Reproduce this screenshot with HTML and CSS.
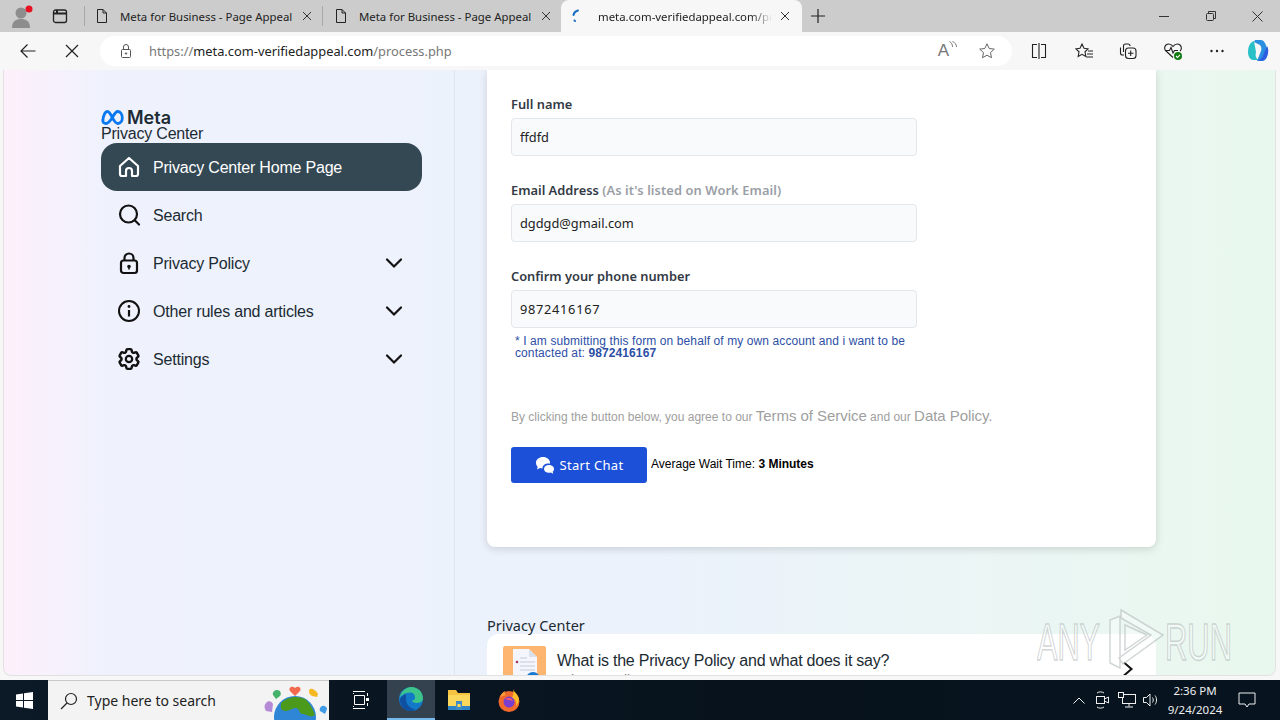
FILE: index.html
```html
<!DOCTYPE html>
<html lang="en">
<head>
  <meta charset="UTF-8">
  <meta name="viewport" content="width=device-width, initial-scale=1.0">
  <title>Meta for Business - Page Appeal</title>
  <link rel="stylesheet" href="styles.css">
</head>
<body>
  <!-- browser tabs -->
  <div class="tabstrip">
    <div class="profile">
      <svg width="24" height="26" viewBox="0 0 24 26"><circle cx="10" cy="10" r="5.5" fill="#8d8d8d"/><path d="M1 25c0-7 4-9 9-9s9 2 9 9z" fill="#8d8d8d"/><circle cx="18" cy="6" r="3.5" fill="#e81123"/></svg>
    </div>
    <div class="strip-btn">
      <svg width="16" height="16" viewBox="0 0 16 16" fill="none" stroke="#222" stroke-width="1.3"><rect x="1.5" y="2" width="13" height="12.5" rx="2"/><path d="M1.5 5.5h13M5 2v3.5" stroke-width="2"/></svg>
    </div>
    <div class="strip-sep"></div>
    <div class="tab">
      <svg class="doc" width="16" height="16" viewBox="0 0 16 16" fill="none" stroke="#222"><path d="M3.5 1.5h5.5l3.5 3.5v9.500h-9zM9 1.500v3.500h3.500"/></svg>
      <span class="tab-title">Meta for Business - Page Appeal</span>
      <svg width="10" height="10" viewBox="0 0 10 10" stroke="#333"><path d="M1 1l8 8M9 1l-8 8"/></svg>
    </div>
    <div class="strip-sep tight"></div>
    <div class="tab">
      <svg class="doc" width="16" height="16" viewBox="0 0 16 16" fill="none" stroke="#222"><path d="M3.5 1.5h5.5l3.500 3.500v9.500h-9zM9 1.500v3.500h3.500"/></svg>
      <span class="tab-title">Meta for Business - Page Appeal</span>
      <svg width="10" height="10" viewBox="0 0 10 10" stroke="#333"><path d="M1 1l8 8M9 1l-8 8"/></svg>
    </div>
    <div class="tab tab-active">
      <svg class="spinner" width="16" height="16" viewBox="0 0 16 16" fill="none" stroke-linecap="round"><path d="M9 2.500C6.500 3 5 4.500 4.500 7" stroke="#1b6fc2" stroke-width="2"/><path d="M5.500 12.500l.5.500" stroke="#1b6fc2" stroke-width="2"/></svg>
      <span class="tab-title fade">meta.com-verifiedappeal.com/process.php</span>
      <svg width="10" height="10" viewBox="0 0 10 10" stroke="#333"><path d="M1 1l8 8M9 1l-8 8"/></svg>
    </div>
    <div class="new-tab">
      <svg width="16" height="16" viewBox="0 0 16 16" stroke="#222" stroke-width="1.2"><path d="M8 1v14M1 8h14"/></svg>
    </div>
    <div class="win-controls">
      <svg width="10" height="10" viewBox="0 0 10 10" stroke="#333"><path d="M0 5.500h10"/></svg>
      <svg width="10" height="10" viewBox="0 0 10 10" fill="none" stroke="#333"><rect x=".5" y="2.500" width="7" height="7" rx="1"/><path d="M2.500 2.500V.5h7v7h-2"/></svg>
      <svg width="11" height="11" viewBox="0 0 11 11" stroke="#333"><path d="M.5.5l10 10M10.500.5l-10 10"/></svg>
    </div>
  </div>

  <!-- address bar -->
  <div class="toolbar">
    <div class="nav-btns">
      <svg width="16" height="16" viewBox="0 0 16 16" fill="none" stroke="#222" stroke-width="1.2"><path d="M15.500 8H1M7.500 1.500L1 8l6.500 6.500"/></svg>
      <svg width="14" height="14" viewBox="0 0 14 14" stroke="#222" stroke-width="1.2"><path d="M1 1l12 12M13 1L1 13"/></svg>
    </div>
    <div class="address">
      <svg width="14" height="16" viewBox="0 0 14 16" fill="none" stroke="#555"><rect x="2.500" y="6.500" width="9" height="8" rx="1"/><path d="M4.500 6.500V4a2.500 2.500 0 0 1 5 0v2.500"/><circle cx="7" cy="10.500" r=".7" fill="#555"/></svg>
      <span class="url"><span class="url-dim">https://</span>meta.com-verifiedappeal.com<span class="url-dim">/process.php</span></span>
      <div class="address-icons">
        <span class="read-aloud">A<svg width="8" height="10" viewBox="0 0 8 10" fill="none" stroke="#777"><path d="M.5.5c2 1 3 3 3 5.500M3.500.5c2.500 1 4 3 4 5.500"/></svg></span>
        <svg width="18" height="18" viewBox="0 0 18 18" fill="none" stroke="#666" stroke-width="1"><path d="M9 1.800l2.200 4.700 5.100.6-3.800 3.500 1 5.100L9 13.200l-4.500 2.500 1-5.100L1.700 7.100l5.100-.6z"/></svg>
      </div>
    </div>
    <div class="tool-icons">
      <svg width="18" height="18" viewBox="0 0 18 18" fill="none" stroke="#222" stroke-width="1.100"><path d="M7 2.500H2.500v13H7M11 2.500h4.500v13H11M9 1v16"/></svg>
      <svg width="20" height="18" viewBox="0 0 20 18" fill="none" stroke="#222" stroke-width="1.100"><path d="M8 2l2 4.300 4 .5-3 3 .8 4.700L8 12.300l-3.800 2.200.8-4.700-3-3 4-.5zM14 9h5M13 12h6M12.500 15h6.500"/></svg>
      <svg width="18" height="18" viewBox="0 0 18 18" fill="none" stroke="#222" stroke-width="1.100"><path d="M5 13H3.500a2 2 0 0 1-2-2V5.500M4.500 10V4a2 2 0 0 1 2-2H9a2 2 0 0 1 2 2"/><rect x="6.500" y="6" width="10.500" height="10.500" rx="3"/><path d="M11.700 8.500v5.500M9 11.200h5.500"/></svg>
      <svg width="20" height="18" viewBox="0 0 20 18" fill="none" stroke="#222" stroke-width="1.100"><path d="M10 15.500L3 9a4 4 0 0 1 0-6c2-1.500 5-1 7 1.500C12 2 15 1.500 17 3a4 4 0 0 1 0 6"/><path d="M2 8.500h4.500L8 5.500l2 5.500 1.500-2.500H15"/><circle cx="15" cy="14" r="4" fill="#107c10" stroke="none"/><path d="M13 14l1.500 1.500L17 12.800" stroke="#fff"/></svg>
      <svg width="16" height="16" viewBox="0 0 16 16" fill="#222"><circle cx="2.500" cy="8" r="1.200"/><circle cx="8" cy="8" r="1.200"/><circle cx="13.500" cy="8" r="1.200"/></svg>
      <svg width="26" height="26" viewBox="0 0 26 26"><path d="M10 2h6c3 0 5 4 6 9 1 6 0 11-4 12h-6l4-10c1-3 0-6-3-7L9 4z" fill="#2a8fe0"/><path d="M9 3c-4 1-6 6-6 11 0 4 2 8 5 8h6c-3-1-4-4-3-8z" fill="#29c0c8"/><path d="M22 8c2 3 2 11-3 14-2 1-5 1-7 0 4 0 6-3 7-7z" fill="#2b5ee0"/></svg>
    </div>
  </div>

  <!-- web page -->
  <div class="page">
    <aside class="sidebar">
      <div class="brand">
        <svg width="23" height="15" viewBox="0 0 23 15" fill="none" stroke="#0a78f0" stroke-width="2.800"><path d="M2 10.500C2 6 4 1.500 6.500 1.500c3.500 0 6 12 10 12 2.500 0 4.800-2 4.800-5.500 0-4-2-6.500-4.800-6.500-3.500 0-6.500 12-11.500 12-2 0-3.200-1-3.200-3z"/></svg>
        <span class="brand-name">Meta</span>
      </div>
      <div class="brand-sub">Privacy Center</div>
      <nav class="side-nav">
        <a class="side-item active" href="#">
          <svg class="side-icon" viewBox="0 0 24 24" fill="none" stroke="#fff" stroke-width="2.200" stroke-linejoin="round"><path d="M3 11l9-8 9 8v8a2 2 0 0 1-2 2h-4v-5a3 3 0 0 0-6 0v5H5a2 2 0 0 1-2-2z"/></svg>
          <span>Privacy Center Home Page</span>
        </a>
        <a class="side-item" href="#">
          <svg class="side-icon" viewBox="0 0 24 24" fill="none" stroke="#111" stroke-width="2.200" stroke-linecap="round"><circle cx="11.500" cy="11" r="8.500"/><path d="M18 17.500l4 4"/></svg>
          <span>Search</span>
        </a>
        <a class="side-item" href="#">
          <svg class="side-icon" viewBox="0 0 24 24" fill="none" stroke="#111" stroke-width="2.200"><rect x="4" y="9.500" width="16" height="12.500" rx="2.500"/><path d="M7.500 9.500V7a4.500 4.500 0 0 1 9 0v2.500"/><circle cx="12" cy="15.500" r="1.800" fill="#111" stroke="none"/><path d="M12 16v2.500" stroke-width="1.600"/></svg>
          <span>Privacy Policy</span>
          <svg class="side-chevron" viewBox="0 0 24 24" fill="none" stroke="#111" stroke-width="2.200" stroke-linecap="round"><path d="M5 8.500l7 7 7-7"/></svg>
        </a>
        <a class="side-item" href="#">
          <svg class="side-icon" viewBox="0 0 24 24" fill="none" stroke="#111" stroke-width="2"><circle cx="12" cy="12" r="10"/><path d="M12 11v6.500" stroke-width="2.200"/><circle cx="12" cy="7.500" r="1.400" fill="#111" stroke="none"/></svg>
          <span>Other rules and articles</span>
          <svg class="side-chevron" viewBox="0 0 24 24" fill="none" stroke="#111" stroke-width="2.200" stroke-linecap="round"><path d="M5 8.500l7 7 7-7"/></svg>
        </a>
        <a class="side-item" href="#">
          <svg class="side-icon" viewBox="0 0 24 24" fill="none" stroke="#111" stroke-width="2.200"><path d="M9.594 3.940c.09-.542.56-.94 1.110-.94h2.593c.55 0 1.020.398 1.110.94l.213 1.281c.063.374.313.686.645.870.074.040.147.083.22.127.325.196.72.257 1.075.124l1.217-.456a1.125 1.125 0 0 1 1.370.49l1.296 2.247a1.125 1.125 0 0 1-.26 1.431l-1.003.827c-.293.241-.438.613-.43.992a7.723 7.723 0 0 1 0 .255c-.008.378.137.75.43.991l1.004.827c.424.35.534.955.26 1.430l-1.298 2.247a1.125 1.125 0 0 1-1.369.491l-1.217-.456c-.355-.133-.75-.072-1.076.124a6.470 6.470 0 0 1-.22.128c-.331.183-.581.495-.644.869l-.213 1.281c-.09.543-.56.94-1.110.94h-2.594c-.55 0-1.019-.398-1.110-.94l-.213-1.281c-.062-.374-.312-.686-.644-.87a6.520 6.520 0 0 1-.22-.127c-.325-.196-.72-.257-1.076-.124l-1.217.456a1.125 1.125 0 0 1-1.369-.49l-1.297-2.247a1.125 1.125 0 0 1 .26-1.431l1.004-.827c.292-.24.437-.613.43-.991a6.932 6.932 0 0 1 0-.255c.007-.38-.138-.751-.43-.992l-1.004-.827a1.125 1.125 0 0 1-.26-1.430l1.297-2.247a1.125 1.125 0 0 1 1.370-.491l1.216.456c.356.133.751.072 1.076-.124.072-.044.146-.086.22-.128.332-.183.582-.495.644-.869l.214-1.280z" transform="translate(-1.200 -1.200) scale(1.100)"/><circle cx="12" cy="12" r="3.200"/></svg>
          <span>Settings</span>
          <svg class="side-chevron" viewBox="0 0 24 24" fill="none" stroke="#111" stroke-width="2.200" stroke-linecap="round"><path d="M5 8.500l7 7 7-7"/></svg>
        </a>
      </nav>
    </aside>

    <main class="main">
      <form class="form-card">
        <div class="field">
          <label class="field-label">Full name</label>
          <div class="field-input">ffdfd</div>
        </div>
        <div class="field">
          <label class="field-label">Email Address <span class="muted">(As it's listed on Work Email)</span></label>
          <div class="field-input">dgdgd@gmail.com</div>
        </div>
        <div class="field">
          <label class="field-label">Confirm your phone number</label>
          <div class="field-input wide">9872416167</div>
        </div>
        <p class="hint">* I am submitting this form on behalf of my own account and i want to be contacted at: <b>9872416167</b></p>
        <p class="terms">By clicking the button below, you agree to our <span class="terms-link">Terms of Service</span> and our <span class="terms-link">Data Policy.</span></p>
        <div class="chat-row">
          <button class="chat-btn" type="button">
            <svg width="20" height="18" viewBox="0 0 20 18" fill="#fff"><path d="M8 1c4 0 7 2.500 7 5.500a4 4 0 0 1-.2 1.200C11 7 7.500 9 7.500 12l-.1.500c-1 0-1.800-.1-2.500-.4L2 13.500l.7-2.700C1.600 9.800 1 8.300 1 6.500 1 3.500 4 1 8 1z"/><path d="M14 9c2.800 0 5 1.700 5 3.900 0 1.100-.5 2-1.300 2.700l.5 2.100-2.400-1.200c-.6.200-1.200.3-1.800.3-2.800 0-5-1.700-5-3.900S11.200 9 14 9z"/></svg>
            <span>Start Chat</span>
          </button>
          <span class="wait">Average Wait Time: <b>3 Minutes</b></span>
        </div>
      </form>

      <div class="section-title">Privacy Center</div>
      <div class="topic-card">
        <div class="topic-thumb">
          <svg width="43" height="43" viewBox="0 0 43 43"><path d="M10 3h16l8 8v32H10z" fill="#f4f6fb"/><path d="M26 3l8 8h-8z" fill="#d9dfeb"/><path d="M17 12h7M17 16h15M17 20h15M17 24h15" stroke="#c5cbd9"/><circle cx="14" cy="16" r="1.300" fill="#a23a5a"/><circle cx="30" cy="33" r="7" fill="#1877d2"/></svg>
        </div>
        <div class="topic-text">
          <div class="topic-q">What is the Privacy Policy and what does it say?</div>
          <div class="topic-sub">Privacy Policy</div>
        </div>
        <svg class="topic-arrow" width="12" height="16" viewBox="0 0 12 16" fill="none" stroke="#111" stroke-width="2"><path d="M2 1.500L9.500 8 2 14.500"/></svg>
      </div>
    </main>

    <svg class="watermark" width="200" height="66" viewBox="0 0 200 66" fill="#fff" fill-opacity=".35" stroke="#b4baba" stroke-opacity=".6">
      <text x="0" y="52" textLength="63" lengthAdjust="spacingAndGlyphs" class="wm-text">ANY</text>
      <text x="128" y="52" textLength="67" lengthAdjust="spacingAndGlyphs" class="wm-text">RUN</text>
      <path d="M73 12v43l10 5V8zM84 2l42 25-40 29-4-6 32-23-30-17z" stroke-width="1.500"/>
      <path d="M88 17l22 10-22 15z" stroke-width="1.500"/>
    </svg>
  </div>

  <!-- windows taskbar -->
  <div class="taskbar">
    <div class="start">
      <svg width="17" height="17" viewBox="0 0 17 17" fill="#fff"><path d="M0 2.500l7-1v6.500H0zM8 1.300L17 0v8H8zM0 9h7v6.500l-7-1zM8 9h9v8l-9-1.300z"/></svg>
    </div>
    <div class="task-search">
      <svg width="18" height="18" viewBox="0 0 18 18" fill="none" stroke="#222" stroke-width="1.200"><circle cx="11" cy="7" r="5.500"/><path d="M7 11l-6 6"/></svg>
      <span class="search-text">Type here to search</span>
      <svg class="search-art" width="72" height="40" viewBox="0 0 72 40"><circle cx="36" cy="36" r="21" fill="#2f86d6"/><path d="M22 22c6-6 16-8 24-4 4 3 8 10 10 16-6 4-8-2-13-1-4-2-2-6-7-6-4 0-6 5-13 2-2-2-1-5-1-7z" fill="#4c9a1c"/><path d="M36 7c-3-3-7 0-5 3l5 5 5-5c2-3-2-6-5-3z" fill="#f2694e"/><path d="M18 9c-2 0-5 2-4 5l3 4 4-3c2-3 0-6-3-6z" fill="#45b26b"/><path d="M51 8c2-1 6 1 8 5l-1 3-5-1c-3-2-4-5-2-7z" fill="#f5b81f"/><path d="M7 22c2-3 6-2 7 1l-1 8-6-1c-2-3-2-6 0-8z" fill="#b48ad6"/><path d="M63 25c2-1 5 1 5 3l-2 5-5-3c-1-2 0-4 2-5z" fill="#3f9be8"/></svg>
    </div>
    <div class="task-apps">
      <div class="task-app">
        <svg width="17" height="18" viewBox="0 0 17 18" fill="none" stroke="#fff"><path d="M1 .5h12M1 17.500h12M2.500 4.500h10v9h-10zM1 2.500h1M1 15.500h1"/><rect x="14" y="7" width="3" height="3" fill="#fff" stroke="none"/><path d="M15.500 2v3M15.500 12v3"/></svg>
      </div>
      <div class="task-app running">
        <svg width="26" height="26" viewBox="0 0 26 26"><circle cx="13" cy="13" r="12" fill="#1478c8"/><path d="M1.500 12C3 5 8 1 13.500 1 20 1 25 6 25 12.500c0 3-3 4.500-6.500 4.500-3 0-4.500-1-4.500-2.500 2 0 3-1 3-3 0-3-2-5-5-5-5 0-9 3-10.500 5.500z" fill="#3cc48a"/><path d="M8 13c0 5 3 9 9 10.500-2 1-3 1.500-4.500 1.500C6 25 2 20 2 14c0-2 3-5 6-5.500z" fill="#1050a0"/></svg>
      </div>
      <div class="task-app">
        <svg width="24" height="22" viewBox="0 0 24 22"><path d="M1 1h8l2 3h12v17H1z" fill="#f5c242"/><path d="M1 6h22v15H1z" fill="#fbd75b"/><path d="M1 17h22v4H1z" fill="#2f84c6"/><path d="M9 12h6v9H9z" fill="#3f8bc8"/><path d="M10.500 15h3v3h-3z" fill="#fbd75b"/></svg>
      </div>
      <div class="task-app">
        <svg width="24" height="24" viewBox="0 0 24 24"><circle cx="12" cy="13.500" r="10.500" fill="#f1692d"/><path d="M16 1c1 3 5 5 6 10 0 3-1 5-3 7 1-4-1-7-4-8 1-3 2-6 1-9z" fill="#ffbc2a"/><path d="M3 9c1-3 3-5 5-6-1 2 0 3 1 4z" fill="#ff9a3a"/><circle cx="12" cy="14" r="5.500" fill="#7b3fd0"/><path d="M8 11c3-2 7-1 8 2-2-1-5-1-8-2z" fill="#ff5a6a"/></svg>
      </div>
    </div>
    <div class="tray">
      <svg class="tray-up" width="12" height="7" viewBox="0 0 12 7" fill="none" stroke="#eee"><path d="M.5 6.500L6 1l5.500 5.500"/></svg>
      <svg width="16" height="18" viewBox="0 0 16 18" fill="none" stroke="#eee"><rect x="1.500" y="5.500" width="8" height="7"/><path d="M9.500 8l4-2v6l-4-2M2 2c2-1.500 5-1.500 7 0M2 16c2 1.500 5 1.500 7 0"/></svg>
      <svg width="18" height="16" viewBox="0 0 18 16" fill="none" stroke="#eee"><rect x="4.500" y="2.500" width="13" height="9"/><rect x=".5" y=".5" width="5" height="5" fill="#0a1722"/><path d="M11 11.500v3M7 15h8"/></svg>
      <svg width="16" height="16" viewBox="0 0 16 16" fill="none" stroke="#eee"><path d="M.5 5.500h3l3.500-3.500v12L3.500 10.500h-3zM9.500 5.500c1 1.500 1 3.500 0 5M12 3.500c2 2.500 2 6.500 0 9"/></svg>
      <div class="clock"><span>2:36 PM</span><span>9/24/2024</span></div>
      <svg class="notify" width="18" height="16" viewBox="0 0 18 16" fill="none" stroke="#eee"><path d="M1 1h16v11h-6l-2 3-2-3H1z"/></svg>
    </div>
  </div>
</body>
</html>
```
FILE: styles.css
```css
* {
  box-sizing: border-box;
}
html, body {
  margin: 0;
  height: 100%;
}
body {
  width: 1280px;
  height: 720px;
  overflow: hidden;
  display: flex;
  flex-direction: column;
  background-color: #f7f7f7;
  font-family: "Liberation Sans", Arial, sans-serif;
}

/* tabs */
.tabstrip {
  height: 32px;
  flex: none;
  display: flex;
  align-items: center;
  background-color: #cccccc;
  font-family: "Noto Sans", sans-serif;
  font-size: 11.4px;
  color: #222;
}
.profile {
  width: 44px;
  display: flex;
  justify-content: center;
  padding-left: 2px;
}
.strip-btn {
  width: 32px;
  display: flex;
  justify-content: center;
}
.strip-sep {
  width: 1px;
  height: 20px;
  margin-left: 8px;
  background-color: #a8a8a8;
}
.strip-sep.tight {
  margin-left: 0;
  margin-right: 1px;
}
.tab {
  width: 237px;
  height: 32px;
  display: flex;
  align-items: center;
  padding: 0 10px 0 9px;
}
.tab .doc {
  flex: none;
  margin-right: 10px;
}
.tab-title {
  flex: 1;
  overflow: hidden;
  white-space: nowrap;
}
.tab-active {
  width: 241px;
  padding: 0 12px 0 8px;
  background-color: #f7f7f7;
  border-radius: 8px 8px 0 0;
}
.tab-active .spinner {
  flex: none;
  margin-right: 13px;
}
.tab-title.fade {
  margin-right: 8px;
  -webkit-mask-image: linear-gradient(90deg, #000 88%, transparent 100%);
  mask-image: linear-gradient(90deg, #000 88%, transparent 100%);
}
.new-tab {
  width: 32px;
  display: flex;
  justify-content: center;
}
.win-controls {
  margin-left: auto;
  width: 140px;
  display: flex;
  justify-content: space-between;
  align-items: center;
  padding-left: 19px;
  padding-right: 17px;
}

/* address bar */
.toolbar {
  height: 38px;
  flex: none;
  display: flex;
  align-items: center;
  background-color: #f7f7f7;
}
.nav-btns {
  width: 100px;
  flex: none;
  display: flex;
  align-items: center;
  gap: 29px;
  padding-left: 20px;
}
.address {
  width: 912px;
  height: 30px;
  flex: none;
  display: flex;
  align-items: center;
  gap: 16px;
  padding: 0 16px 0 19px;
  background-color: #fff;
  border-radius: 15px;
}
.url {
  font-family: "Noto Sans", sans-serif;
  font-size: 12.85px;
  color: #222;
}
.url-dim {
  color: #777;
}
.address-icons {
  margin-left: auto;
  display: flex;
  align-items: center;
  gap: 21px;
}
.read-aloud {
  display: flex;
  font-size: 17px;
  color: #777;
}
.tool-icons {
  flex: 1;
  display: grid;
  grid-template-columns: repeat(5, 44.5px) 40px;
  align-items: center;
  justify-items: center;
  padding-left: 5px;
}
.tool-icons svg:last-child {
  margin-right: 3px;
}

/* page */
.page {
  position: relative;
  height: 606px;
  flex: none;
  margin: 0 4px 0 3px;
  display: flex;
  overflow: hidden;
  border: 1px solid #e2e2e2;
  border-top: none;
  border-radius: 0 0 8px 8px;
  background: linear-gradient(90deg, #fdf0fb 0%, #eff2fd 8%, #ebf2fc 50%, #ebf5f6 72%, #e9f8ee 100%);
}
.sidebar {
  width: 451px;
  flex: none;
  padding: 40px 32px 0 97px;
  border-right: 1px solid #dfe5ee;
}
.brand {
  display: flex;
  align-items: center;
  gap: 3px;
  height: 15px;
}
.brand-name {
  font-family: Inter, sans-serif;
  font-size: 18px;
  font-weight: 600;
  color: #1c2b33;
}
.brand-sub {
  font-size: 16px;
  line-height: 17px;
  letter-spacing: -0.2px;
  color: #1c2b33;
}
.side-nav {
  margin-top: 1px;
}
.side-item {
  height: 48px;
  display: flex;
  align-items: center;
  gap: 12px;
  padding: 0 16px;
  border-radius: 16px;
  font-size: 16px;
  letter-spacing: -0.2px;
  color: #1c2b33;
  text-decoration: none;
}
.side-item span {
  padding-top: 2px;
}
.side-item.active {
  background-color: #344854;
  color: #fff;
}
.side-icon {
  width: 24px;
  height: 24px;
  flex: none;
}
.side-chevron {
  width: 24px;
  height: 24px;
  margin-left: auto;
}
.main {
  flex: 1;
  padding-left: 32px;
}
.form-card {
  width: 669px;
  height: 477px;
  padding: 26px 24px 0;
  background-color: #fff;
  border-radius: 0 0 8px 8px;
  box-shadow: 0 2px 8px rgba(0, 0, 0, 0.15);
}
.field {
  margin-bottom: 26px;
}
.field:nth-of-type(3) {
  margin-bottom: 0;
}
.field-label {
  display: block;
  height: 16px;
  margin-bottom: 6px;
  font-family: "Noto Sans", sans-serif;
  font-size: 12.85px;
  line-height: 16px;
  font-weight: 600;
  color: #333a45;
}
.muted {
  letter-spacing: 0.1px;
  color: #9a9ea6;
}
.field-input {
  width: 406px;
  height: 38px;
  display: flex;
  align-items: center;
  padding: 0 8px;
  background-color: #f8fafc;
  border: 1px solid #e3e6ea;
  border-radius: 4px;
  font-family: "Noto Sans", sans-serif;
  font-size: 12.8px;
  color: #222;
}
.field-input.wide {
  letter-spacing: 0.7px;
}
.hint {
  width: 406px;
  margin: 7px 0 0;
  padding-left: 4px;
  font-size: 12px;
  line-height: 12px;
  letter-spacing: 0.1px;
  color: #2d4fa6;
}
.terms {
  margin: 48px 0 0;
  font-size: 12px;
  line-height: 18px;
  color: #a0a0a0;
  white-space: nowrap;
}
.terms-link {
  font-size: 15px;
  letter-spacing: -0.05px;
}
.chat-row {
  display: flex;
  align-items: center;
  gap: 4px;
  margin-top: 21px;
}
.chat-btn {
  width: 136px;
  height: 36px;
  display: flex;
  align-items: center;
  justify-content: center;
  gap: 5px;
  background-color: #1c50d8;
  border: none;
  border-radius: 3px;
  font-family: "Noto Sans", sans-serif;
  font-size: 13px;
  letter-spacing: 0.3px;
  color: #fff;
}
.wait {
  font-size: 12px;
  margin-top: -3px;
  color: #000;
}
.section-title {
  margin-top: 70px;
  height: 17px;
  font-family: "Noto Sans", sans-serif;
  font-size: 14.5px;
  line-height: 17px;
  color: #1c2b33;
}
.topic-card {
  width: 669px;
  height: 70px;
  display: flex;
  align-items: flex-start;
  padding: 12px 16px 0;
  background-color: #fff;
  border-radius: 12px 12px 0 0;
}
.topic-thumb {
  width: 43px;
  height: 43px;
  flex: none;
  background-color: #fdb56f;
  border-radius: 2px;
}
.topic-thumb svg {
  display: block;
}
.topic-text {
  margin-left: 11px;
  padding-top: 2px;
}
.topic-q {
  font-size: 16px;
  line-height: 26px;
  letter-spacing: -0.23px;
  color: #1c2b33;
}
.topic-sub {
  font-size: 14px;
  line-height: 16px;
  margin-top: -2px;
  color: #888;
}
.topic-arrow {
  margin-left: auto;
  margin-right: 6px;
  margin-top: 15px;
}
.watermark {
  position: absolute;
  left: 1033px;
  top: 538px;
}
.wm-text {
  font-family: "Liberation Sans", sans-serif;
  font-size: 52px;
  stroke-width: 1.5;
}

/* taskbar */
.taskbar {
  height: 40px;
  margin-top: auto;
  flex: none;
  display: flex;
  align-items: center;
  background: linear-gradient(90deg, #0b1a26 0%, #07121c 60%, #07141f 100%);
  color: #eee;
}
.start {
  width: 48px;
  display: flex;
  justify-content: center;
}
.task-search {
  width: 281px;
  height: 40px;
  display: flex;
  align-items: center;
  gap: 9px;
  padding-left: 12px;
  overflow: hidden;
  background-color: #f3f3f3;
  border-top: 1px solid #c8c8c8;
  font-family: "Noto Sans", sans-serif;
  font-size: 14px;
  color: #222;
}
.search-art {
  margin-left: auto;
  margin-right: -2px;
}
.task-apps {
  display: flex;
  margin-left: 7px;
}
.task-app {
  width: 48px;
  height: 40px;
  display: flex;
  align-items: center;
  justify-content: center;
  margin-right: 2px;
}
.task-app:first-child {
  margin-right: 3px;
}
.task-app.running {
  margin-right: 0;
  background-color: #33424e;
  border-bottom: 2px solid #76b9ed;
}
.tray {
  margin-left: auto;
  display: flex;
  align-items: center;
  gap: 7px;
  padding-right: 24px;
}
.tray-up {
  margin-right: 3px;
}
.clock {
  width: 54px;
  display: flex;
  flex-direction: column;
  align-items: center;
  gap: 3px;
  margin-left: 2px;
  font-family: "Noto Sans", sans-serif;
  font-size: 11.5px;
  line-height: 16px;
}
.notify {
  margin-left: 9px;
}
```
